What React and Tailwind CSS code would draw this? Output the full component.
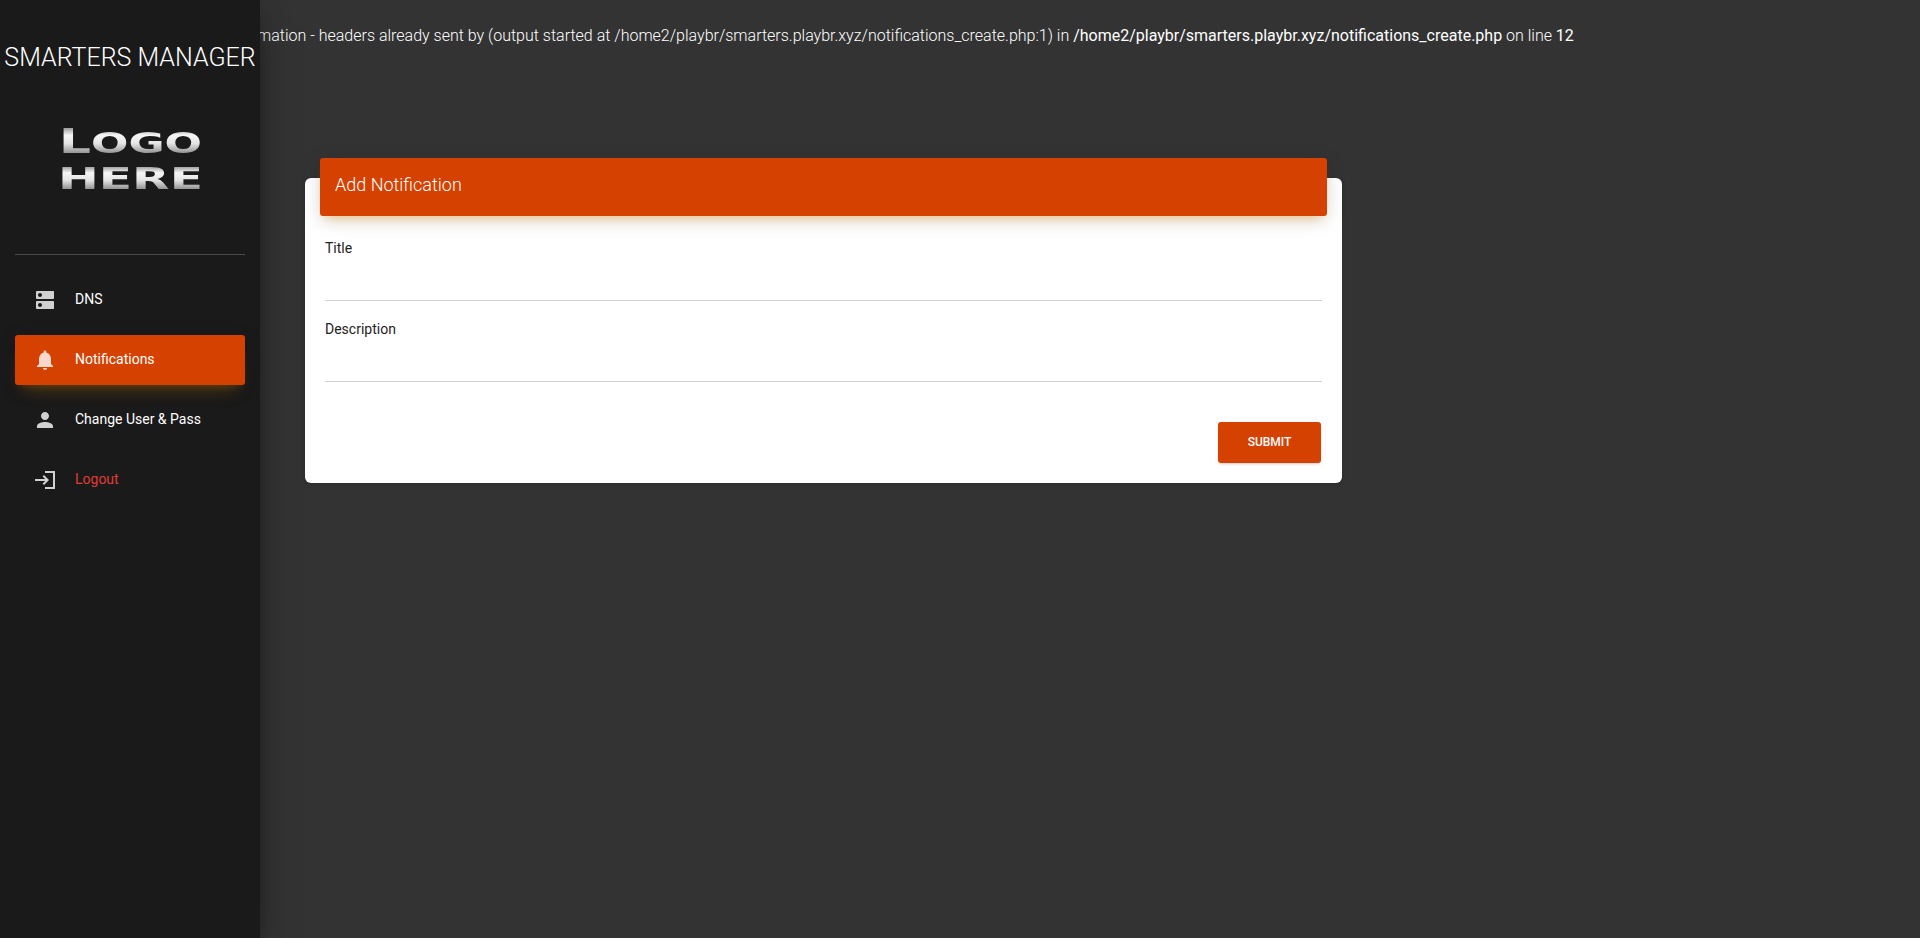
import React from "react";

const Icon = ({ d }) => (
  <svg viewBox="0 0 24 24" className="h-6 w-6 shrink-0 fill-white opacity-80">
    <path d={d} />
  </svg>
);

const icons = {
  dns: "M20 13H4c-.55 0-1 .45-1 1v6c0 .55.45 1 1 1h16c.55 0 1-.45 1-1v-6c0-.55-.45-1-1-1zM7 19c-1.1 0-2-.9-2-2s.9-2 2-2 2 .9 2 2-.9 2-2 2zM20 3H4c-.55 0-1 .45-1 1v6c0 .55.45 1 1 1h16c.55 0 1-.45 1-1V4c0-.55-.45-1-1-1zM7 9c-1.1 0-2-.9-2-2s.9-2 2-2 2 .9 2 2-.9 2-2 2z",
  bell: "M12 22c1.1 0 2-.9 2-2h-4c0 1.1.89 2 2 2zm6-6v-5c0-3.07-1.64-5.64-4.5-6.32V4c0-.83-.67-1.5-1.5-1.5s-1.5.67-1.5 1.5v.68C7.63 5.36 6 7.92 6 11v5l-2 2v1h16v-1l-2-2z",
  person: "M12 12c2.21 0 4-1.79 4-4s-1.79-4-4-4-4 1.79-4 4 1.79 4 4 4zm0 2c-2.67 0-8 1.34-8 4v2h16v-2c0-2.66-5.33-4-8-4z",
  login: "M11 7L9.6 8.4l2.6 2.6H2v2h10.2l-2.6 2.6L11 17l5-5-5-5zm11-4h-10v2h8v14h-8v2h10V3z",
};

const items = [
  { label: "DNS", icon: icons.dns },
  { label: "Notifications", icon: icons.bell, active: true },
  { label: "Change User & Pass", icon: icons.person },
  { label: "Logout", icon: icons.login, red: true },
];

function Logo() {
  return (
    <svg viewBox="0 0 150 72" className="h-[72px] w-[150px]">
      <defs>
        <linearGradient id="metal" x1="0" y1="0" x2="0" y2="1">
          <stop offset="0.12" stopColor="#8c8c8c" />
          <stop offset="0.34" stopColor="#f6f6f6" />
          <stop offset="0.55" stopColor="#e4e4e4" />
          <stop offset="0.86" stopColor="#7f7f7f" />
        </linearGradient>
        <filter id="soft" x="-5%" y="-10%" width="110%" height="120%">
          <feGaussianBlur stdDeviation="0.45" />
        </filter>
      </defs>
      <g fontFamily="'DejaVu Sans', sans-serif" fontWeight="700" filter="url(#soft)">
        <text x="4" y="31" fontSize="29" textLength="143" lengthAdjust="spacingAndGlyphs" fill="url(#metal)">
          <tspan fontSize="33">L</tspan>OGO
        </text>
        <text x="3" y="67" fontSize="30" textLength="145" lengthAdjust="spacingAndGlyphs" fill="url(#metal)">HERE</text>
      </g>
    </svg>
  );
}

function Field({ label, className }) {
  return (
    <div className={`mx-5 flex flex-col ${className}`}>
      <label className="text-sm leading-5 font-normal text-[#222222]">{label}</label>
      <div className="mt-auto border-b border-[#d2d2d2]" />
    </div>
  );
}

export default function App() {
  return (
    <div className="relative h-[938px] w-full overflow-hidden bg-[#333333] font-['Roboto',sans-serif] font-light text-white">
      <p className="whitespace-nowrap pt-6 text-base leading-6">
        <b className="font-normal">Warning</b>: Cannot modify header information - headers already sent by (output started at /home2/playbr/smarters.playbr.xyz/notifications_create.php:1) in <b className="font-normal">/home2/playbr/smarters.playbr.xyz/notifications_create.php</b> on line <b className="font-normal">12</b>
      </p>

      <aside className="absolute inset-y-0 left-0 flex w-[260px] flex-col bg-[#1a1a1a] shadow-[0_16px_38px_-12px_rgba(0,0,0,0.56),0_4px_25px_0_rgba(0,0,0,0.12),0_8px_10px_-5px_rgba(0,0,0,0.2)]">
        <div className="whitespace-nowrap pt-[43px] text-center text-[25px] leading-[30px] font-light">SMARTERS MANAGER</div>
        <div className="flex justify-center pt-[49px]">
          <Logo />
        </div>
        <div className="mx-[15px] mt-[60px] border-b border-[#4a4a4a]" />
        <nav className="mx-[15px] mt-5 flex flex-col gap-[10px]">
          {items.map((it) => (
            <div
              key={it.label}
              className={`flex h-[50px] items-center gap-[18px] rounded-[3px] pl-[18px] text-sm font-normal ${
                it.active
                  ? "bg-[#d54100] shadow-[0_12px_20px_-10px_rgba(255,152,0,0.28),0_4px_20px_0_rgba(0,0,0,0.12),0_7px_8px_-5px_rgba(255,152,0,0.2)]"
                  : ""
              } ${it.red ? "text-[#e03a34]" : "text-white"}`}
            >
              <Icon d={it.icon} />
              <span className="pb-[2px]">{it.label}</span>
            </div>
          ))}
        </nav>
      </aside>

      <main className="ml-[305px] mt-[130px] w-[1037px]">
        <section className="flex flex-col rounded-md bg-white pb-5 shadow-[0_1px_4px_0_rgba(0,0,0,0.14)]">
          <header className="mx-[15px] -mt-5 flex h-[58px] items-center rounded-[3px] bg-[#d54100] px-[15px] pb-1 text-lg font-light text-white shadow-[0_4px_20px_0_rgba(0,0,0,0.14),0_7px_10px_-5px_rgba(255,152,0,0.4)]">
            Add Notification
          </header>
          <Field label="Title" className="h-[85px] pt-[22px]" />
          <Field label="Description" className="h-[81px] pt-[18px]" />
          <div className="mx-[21px] mt-10 flex justify-end">
            <button className="h-[41px] w-[103px] rounded-[3px] bg-[#d54100] pb-[2px] text-xs font-medium text-white shadow-[0_2px_2px_0_rgba(153,153,153,0.14),0_3px_1px_-2px_rgba(153,153,153,0.2),0_1px_5px_0_rgba(153,153,153,0.12)]">
              SUBMIT
            </button>
          </div>
        </section>
      </main>
    </div>
  );
}
